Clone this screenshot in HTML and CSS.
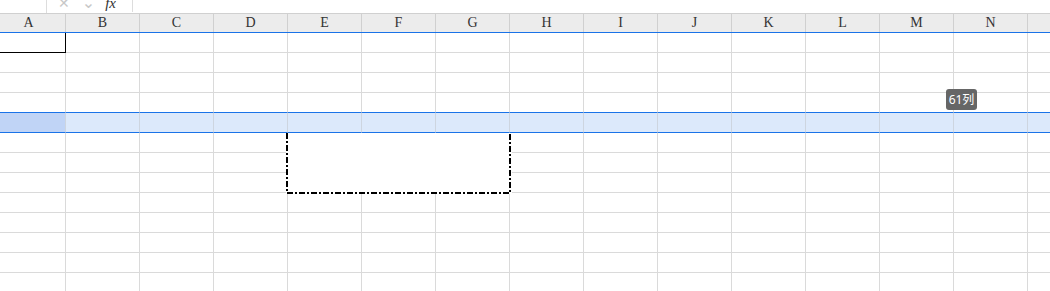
FILE: index.html
```html
<!DOCTYPE html>
<html lang="en">
<head>
    <meta charset="UTF-8">
    <title>Sheet</title>
    <link rel="stylesheet" href="styles.css">
</head>
<body>
    <div class="formula-bar">
        <div class="name-box"><span class="caret">&#9662;</span></div>
        <div class="fx-tools">
            <span class="fx-cancel">&#10005;</span>
            <span class="fx-ok">&#8964;</span>
            <span class="fx-label">fx</span>
        </div>
        <div class="fx-input"></div>
    </div>

    <div class="sheet">
        <div class="col-header">
            <div class="hcell">A</div>
            <div class="hcell">B</div>
            <div class="hcell">C</div>
            <div class="hcell">D</div>
            <div class="hcell">E</div>
            <div class="hcell">F</div>
            <div class="hcell">G</div>
            <div class="hcell">H</div>
            <div class="hcell">I</div>
            <div class="hcell">J</div>
            <div class="hcell">K</div>
            <div class="hcell">L</div>
            <div class="hcell">M</div>
            <div class="hcell">N</div>
            <div class="hcell">O</div>
        </div>
        <div id="grid"></div>
    </div>

    <div class="tip">61列</div>

    <svg class="copy-marquee" width="226" height="62" viewBox="0 0 226 62">
        <rect x="0" y="0" width="226" height="61" fill="#fff"/>
        <path d="M1 0 V60 H224 V0" fill="none" stroke="#000" stroke-width="2"
              stroke-dasharray="6 2 2 2"/>
    </svg>

    <script>
        // build the body rows of the grid
        const grid = document.getElementById('grid');
        const rows = 13, cols = 15, selectedRow = 4;
        for (let r = 0; r < rows; r++) {
            const row = document.createElement('div');
            row.className = 'row';
            if (r === selectedRow - 1) row.classList.add('before-sel');
            if (r === selectedRow) row.classList.add('sel');
            for (let c = 0; c < cols; c++) {
                const cell = document.createElement('div');
                cell.className = 'cell';
                if (r === 0 && c === 0) cell.classList.add('active');
                row.appendChild(cell);
            }
            grid.appendChild(row);
        }
    </script>
</body>
</html>
```

FILE: styles.css
```css
body {
    margin: 0;
    background: #fff;
    font-family: 'Liberation Serif', 'Times New Roman', serif;
    overflow: hidden;
    position: relative;
    height: 291px;
}
.formula-bar {
    display: flex;
    height: 13px;
    overflow: hidden;
    background: #fff;
}
.name-box {
    width: 46px;
    border-right: 1px solid #ddd;
    position: relative;
}
.caret {
    position: absolute;
    right: 3px;
    top: -9px;
    font-size: 10px;
    color: #555;
    font-family: 'DejaVu Sans', sans-serif;
}
.fx-tools {
    width: 85px;
    border-right: 1px solid #ddd;
    display: flex;
    align-items: flex-end;
    margin-top: -10px;
    height: 22px;
    font-family: 'DejaVu Sans', sans-serif;
}
.fx-cancel {
    color: #c8c8c8;
    font-size: 14px;
    margin-left: 11px;
    line-height: 18px;
}
.fx-ok {
    color: #c8c8c8;
    font-size: 16px;
    margin-left: 12px;
    line-height: 18px;
}
.fx-label {
    color: #333;
    font-style: italic;
    font-family: 'Liberation Serif', serif;
    font-size: 15px;
    margin-left: 10px;
    line-height: 18px;
}
.fx-input {
    flex: 1;
}
.sheet {
    margin-left: -8px;
    width: 1110px;
}
.col-header {
    display: flex;
    height: 18px;
    border-top: 1px solid #d0d0d0;
    border-bottom: 1px solid #1a73e8;
    background: #ececec;
}
.hcell {
    width: 73px;
    border-right: 1px solid #d0d0d0;
    text-align: center;
    font-size: 14px;
    line-height: 18px;
    color: #333;
}
.row {
    display: flex;
}
.cell {
    width: 73px;
    height: 19px;
    border-right: 1px solid #dadada;
    border-bottom: 1px solid #dadada;
}
.cell.active {
    border-right-color: #000;
    border-bottom-color: #000;
}
.row.before-sel .cell {
    border-bottom-color: #1a73e8;
}
.row.sel .cell {
    background: #dce9fb;
    border-bottom-color: #1a73e8;
    border-right-color: #cdd5e0;
}
.row.sel .cell:first-child {
    background: #c0d4f6;
}
.tip {
    position: absolute;
    left: 946px;
    top: 89px;
    width: 31px;
    height: 21px;
    line-height: 21px;
    background: #666;
    border-radius: 3px;
    color: #fff;
    font-size: 12px;
    text-align: center;
    font-family: 'Noto Sans', 'Noto Sans CJK SC', sans-serif;
}
.copy-marquee {
    position: absolute;
    left: 286px;
    top: 133px;
}
```
